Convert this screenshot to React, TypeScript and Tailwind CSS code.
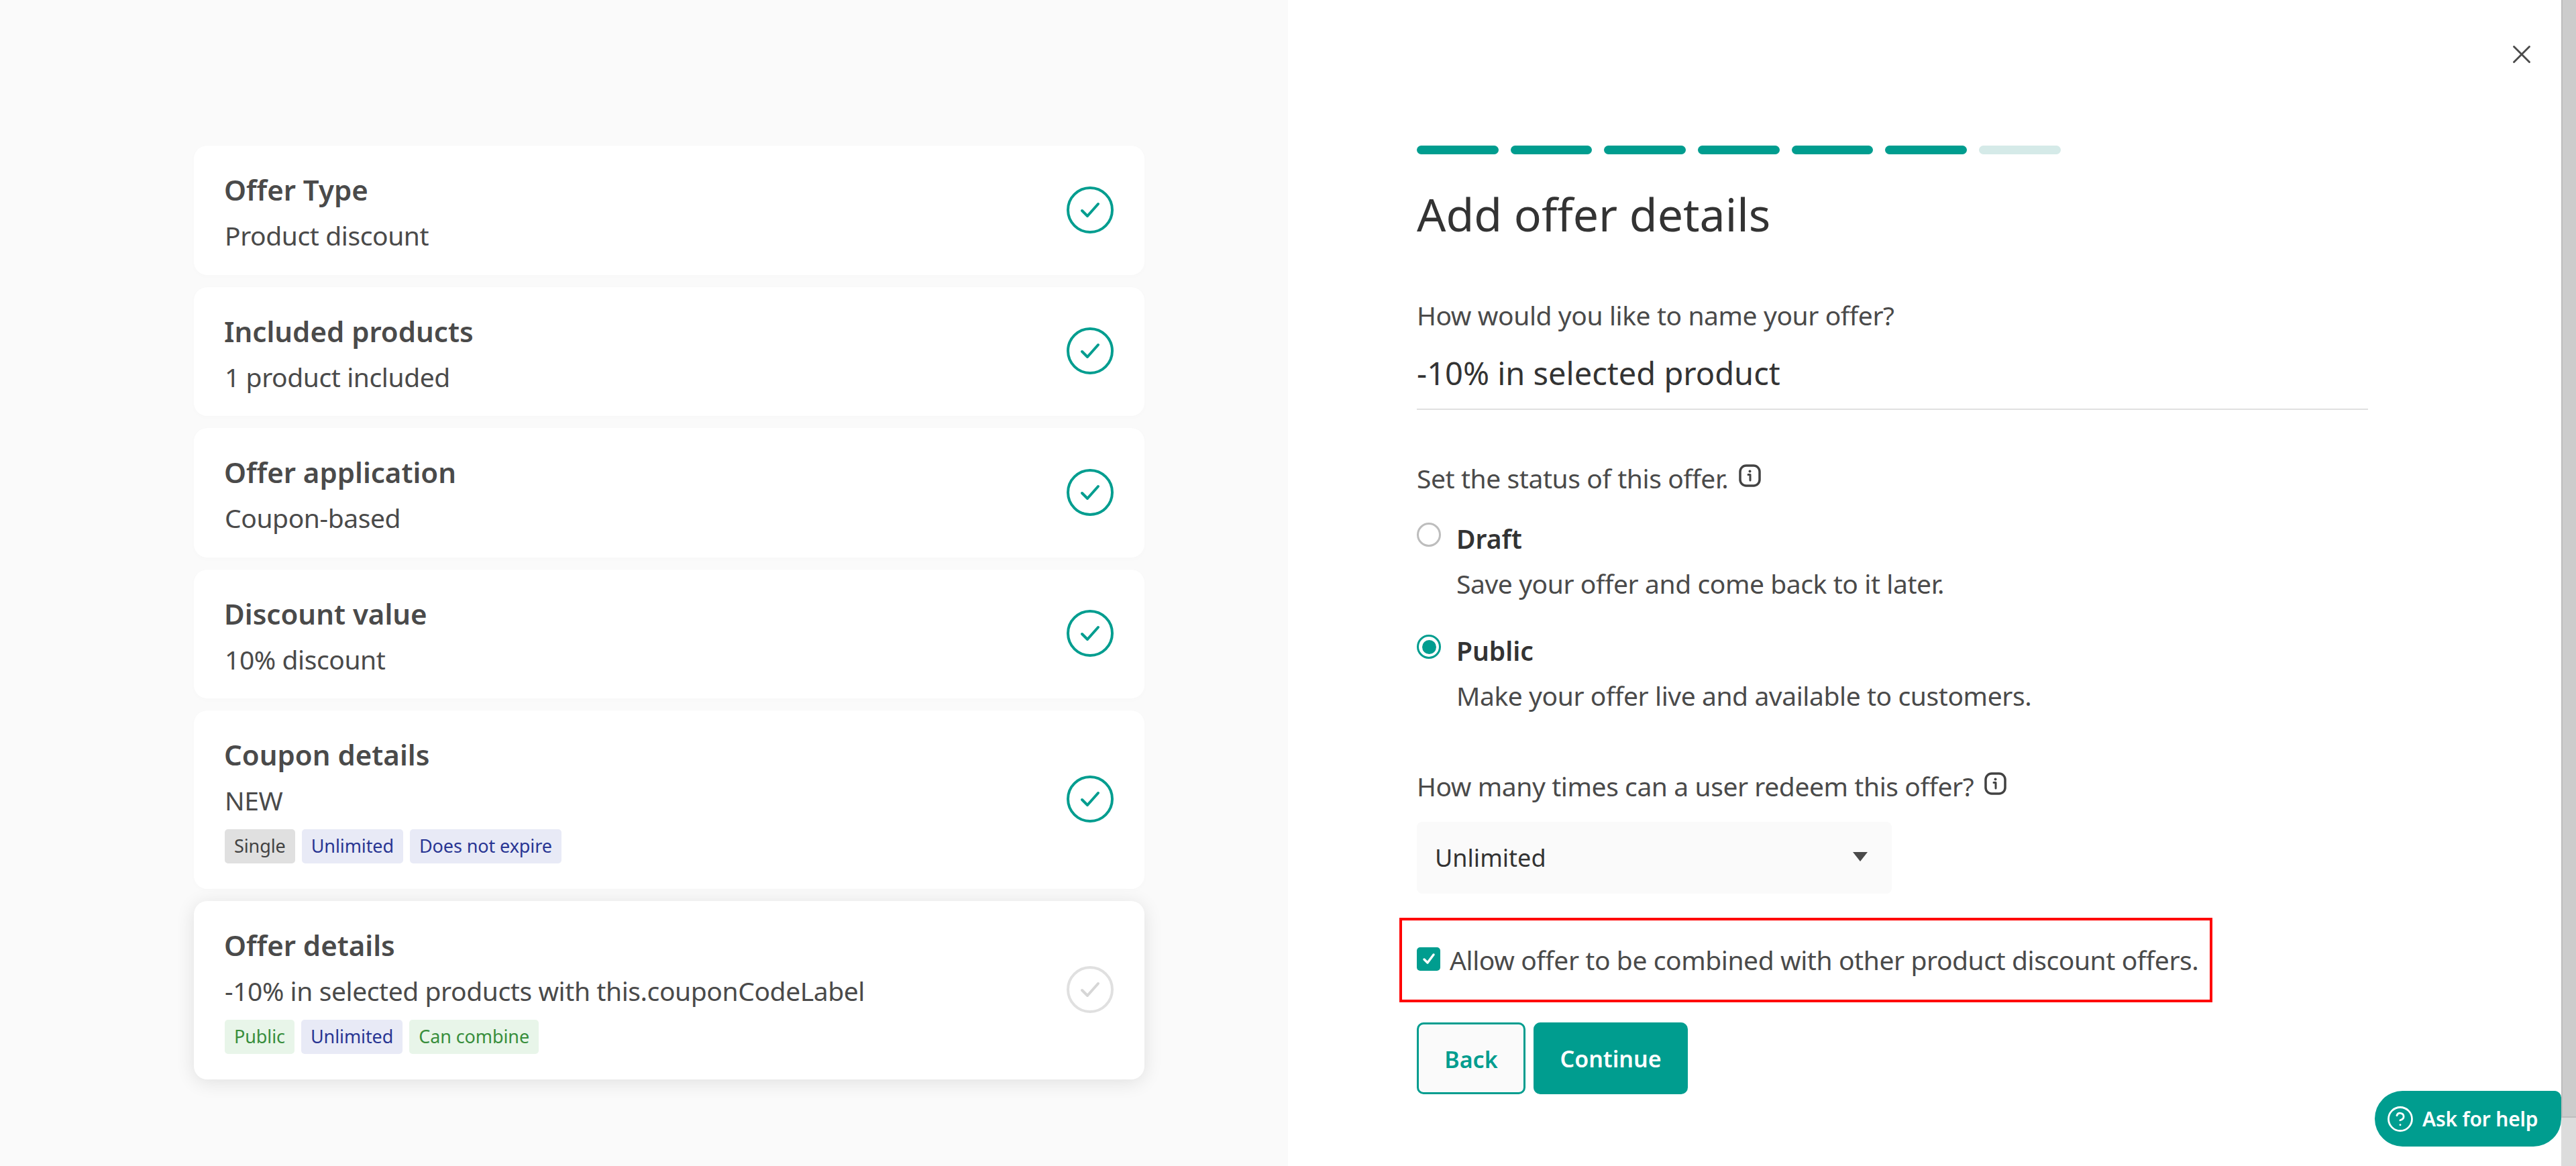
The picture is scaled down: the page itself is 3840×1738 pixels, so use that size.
import { CircleHelp, X } from "lucide-react";

type Tag = { label: string; tone: "gray" | "blue" | "green" };

type Step = {
  title: string;
  sub: string;
  tags?: Tag[];
  active?: boolean;
};

const steps: Step[] = [
  { title: "Offer Type", sub: "Product discount" },
  { title: "Included products", sub: "1 product included" },
  { title: "Offer application", sub: "Coupon-based" },
  { title: "Discount value", sub: "10% discount" },
  {
    title: "Coupon details",
    sub: "NEW",
    tags: [
      { label: "Single", tone: "gray" },
      { label: "Unlimited", tone: "blue" },
      { label: "Does not expire", tone: "blue" },
    ],
  },
  {
    title: "Offer details",
    sub: "-10% in selected products with this.couponCodeLabel",
    active: true,
    tags: [
      { label: "Public", tone: "green" },
      { label: "Unlimited", tone: "blue" },
      { label: "Can combine", tone: "green" },
    ],
  },
];

const tagTones = {
  gray: "bg-[#e0e0e0] text-[#424242]",
  blue: "bg-[#e8eaf6] text-[#283593]",
  green: "bg-[#e8f5e9] text-[#388e3c]",
};

const CheckCircle = ({ done, lifted }: { done: boolean; lifted: boolean }) => (
  <svg width="74" height="74" viewBox="0 0 74 74" fill="none" className={`shrink-0 ${lifted ? "-mt-[9px]" : ""}`}>
    <circle cx="37" cy="37" r="33" stroke={done ? "#009d8f" : "#e0e0e0"} strokeWidth="4" />
    <path
      d="M25 38l8 8 16-18"
      stroke={done ? "#009d8f" : "#d6d6d6"}
      strokeWidth="4"
      strokeLinecap="round"
      strokeLinejoin="round"
    />
  </svg>
);

const InfoIcon = () => (
  <svg width="33" height="34" viewBox="0 0 33 34" fill="none" className="shrink-0">
    <rect x="2" y="2" width="29" height="30" rx="9" stroke="#424242" strokeWidth="3.5" />
    <circle cx="16.5" cy="10.5" r="2" fill="#424242" />
    <path d="M14 15.5H17V24" stroke="#424242" strokeWidth="3" strokeLinecap="round" strokeLinejoin="round" />
  </svg>
);

const StepCard = ({ step }: { step: Step }) => (
  <div
    className={`flex w-[1417px] items-center justify-between rounded-[20px] bg-white pl-[45px] pr-[44px] pt-[36px] ${
      step.tags ? "pb-[38px]" : "pb-[28.5px]"
    } ${step.active ? "shadow-[0_4px_28px_rgba(0,0,0,0.11)]" : "shadow-[0_2px_10px_rgba(0,0,0,0.015)]"}`}
  >
    <div>
      <div className="h-[60px] text-[42px] font-semibold leading-[60px] text-[#4a4a4a]">{step.title}</div>
      <div className="ml-[1px] mt-[8px] h-[60px] text-[39px] leading-[60px] tracking-[-0.42px] text-[#4a4a4a]">{step.sub}</div>
      {step.tags && (
        <div className="ml-[1px] mt-[13px] flex gap-[10px]">
          {step.tags.map((tag) => (
            <span
              key={tag.label}
              className={`flex h-[51px] items-center rounded-[5px] px-[14px] text-[27px] tracking-[-0.1px] ${tagTones[tag.tone]}`}
            >
              {tag.label}
            </span>
          ))}
        </div>
      )}
    </div>
    <CheckCircle done={!step.active} lifted={!step.tags} />
  </div>
);

const Radio = ({ checked, title, sub }: { checked: boolean; title: string; sub: string }) => (
  <div className="flex gap-[23px]">
    <div
      className={`mt-[1px] flex h-[36px] w-[36px] shrink-0 items-center justify-center rounded-full border-[3px] bg-white ${
        checked ? "border-[#009d8f]" : "border-[#bdbdbd]"
      }`}
    >
      {checked && <div className="h-[21px] w-[21px] rounded-full bg-[#009d8f]" />}
    </div>
    <div>
      <div className="h-[50px] text-[39px] font-semibold leading-[50px] text-[#333333]">{title}</div>
      <div className="mt-[17px] h-[50px] text-[39px] leading-[50px] tracking-[-0.42px] text-[#4a4a4a]">{sub}</div>
    </div>
  </div>
);

export default function App() {
  return (
    <div className="relative flex h-[1738px] w-[3840px] overflow-hidden bg-white font-['Noto_Sans',sans-serif]">
      <div className="h-full w-[1920px] shrink-0 bg-[#fafafa] pl-[289px] pt-[217px]">
        <div className="flex flex-col gap-[18px]">
          {steps.map((step) => (
            <StepCard key={step.title} step={step} />
          ))}
        </div>
      </div>

      <div className="flex h-full flex-1 flex-col pl-[192px] pt-[217px]">
        <div className="flex gap-[18.2px]">
          {[1, 2, 3, 4, 5, 6, 7].map((n) => (
            <div key={n} className={`h-[13px] w-[121.5px] rounded-full ${n < 7 ? "bg-[#009d8f]" : "bg-[#d5eae8]"}`} />
          ))}
        </div>
        <h1 className="mt-[48px] h-[82px] text-[68px] font-normal leading-[82px] text-[#333333]">Add offer details</h1>
        <div className="mt-[85px] h-[50px] text-[39px] leading-[50px] tracking-[-0.42px] text-[#4a4a4a]">How would you like to name your offer?</div>
        <div className="mt-[31px] h-[85px] w-[1418px] border-b-2 border-[#e0e0e0] text-[47px] leading-[60px] text-[#333333]">
          -10% in selected product
        </div>
        <div className="mt-[77px] flex h-[50px] items-center gap-[16px] text-[39px] leading-[50px] tracking-[-0.42px] text-[#4a4a4a]">
          Set the status of this offer.
          <span className="-mt-[8px]">
            <InfoIcon />
          </span>
        </div>
        <div className="mt-[40px] flex flex-col gap-[50px]">
          <Radio checked={false} title="Draft" sub="Save your offer and come back to it later." />
          <Radio checked title="Public" sub="Make your offer live and available to customers." />
        </div>
        <div className="mt-[85px] flex h-[50px] items-center gap-[16px] text-[39px] leading-[50px] tracking-[-0.42px] text-[#4a4a4a]">
          How many times can a user redeem this offer?
          <span className="-mt-[8px]">
            <InfoIcon />
          </span>
        </div>
        <div className="mt-[28px] flex h-[107px] w-[708px] items-center justify-between rounded-[8px] bg-[#fafafa] pl-[27px] pr-[36px] text-[36px] text-[#333333]">
          Unlimited
          <svg width="22" height="14" viewBox="0 0 22 14" className="-mt-[4px]">
            <path d="M0 0h22L11 14z" fill="#4a4a4a" />
          </svg>
        </div>
        <div className="-ml-[26px] mt-[36px] flex h-[126px] w-[1212px] items-center gap-[14px] whitespace-nowrap border-4 border-[#ff0000] pl-[22px] text-[39px] tracking-[-0.42px] text-[#4a4a4a]">
          <div className="-mt-[4px] flex h-[35px] w-[35px] shrink-0 items-center justify-center rounded-[5px] bg-[#009d8f]">
            <svg width="26" height="26" viewBox="0 0 26 26" fill="none">
              <path d="M6 14l5 5 9-12" stroke="white" strokeWidth="3.5" strokeLinecap="round" strokeLinejoin="round" />
            </svg>
          </div>
          Allow offer to be combined with other product discount offers.
        </div>
        <div className="mt-[30px] flex gap-[12px]">
          <button className="h-[107px] w-[162px] rounded-[10px] border-[3px] border-[#009d8f] bg-[#fafafa] pt-[4px] text-[34px] font-semibold text-[#009d8f]">
            Back
          </button>
          <button className="h-[107px] w-[230px] rounded-[10px] bg-[#009d8f] pt-[2px] text-[34px] font-semibold text-white">
            Continue
          </button>
        </div>
      </div>

      {/* close, help tab and the scrollbar sit over the page */}
      <X className="absolute left-[3736px] top-[58px] text-[#4a4a4a]" size={46} strokeWidth={1.5} />
      <div className="absolute bottom-0 right-0 top-0 w-[22px] bg-[#dcdcdc]">
        <div className="h-[1666px] border-b-2 border-l-2 border-[#bdbdbd] bg-[#cccccc]" />
      </div>
      <div className="absolute left-[3540px] top-[1626px] flex h-[83px] w-[278px] items-center gap-[12px] rounded-l-[42px] rounded-br-[42px] rounded-tr-[10px] bg-[#009d8f] pl-[17px] text-[30px] font-semibold tracking-[-0.2px] text-white">
        <CircleHelp size={42} strokeWidth={1.6} />
        Ask for help
      </div>
    </div>
  );
}
